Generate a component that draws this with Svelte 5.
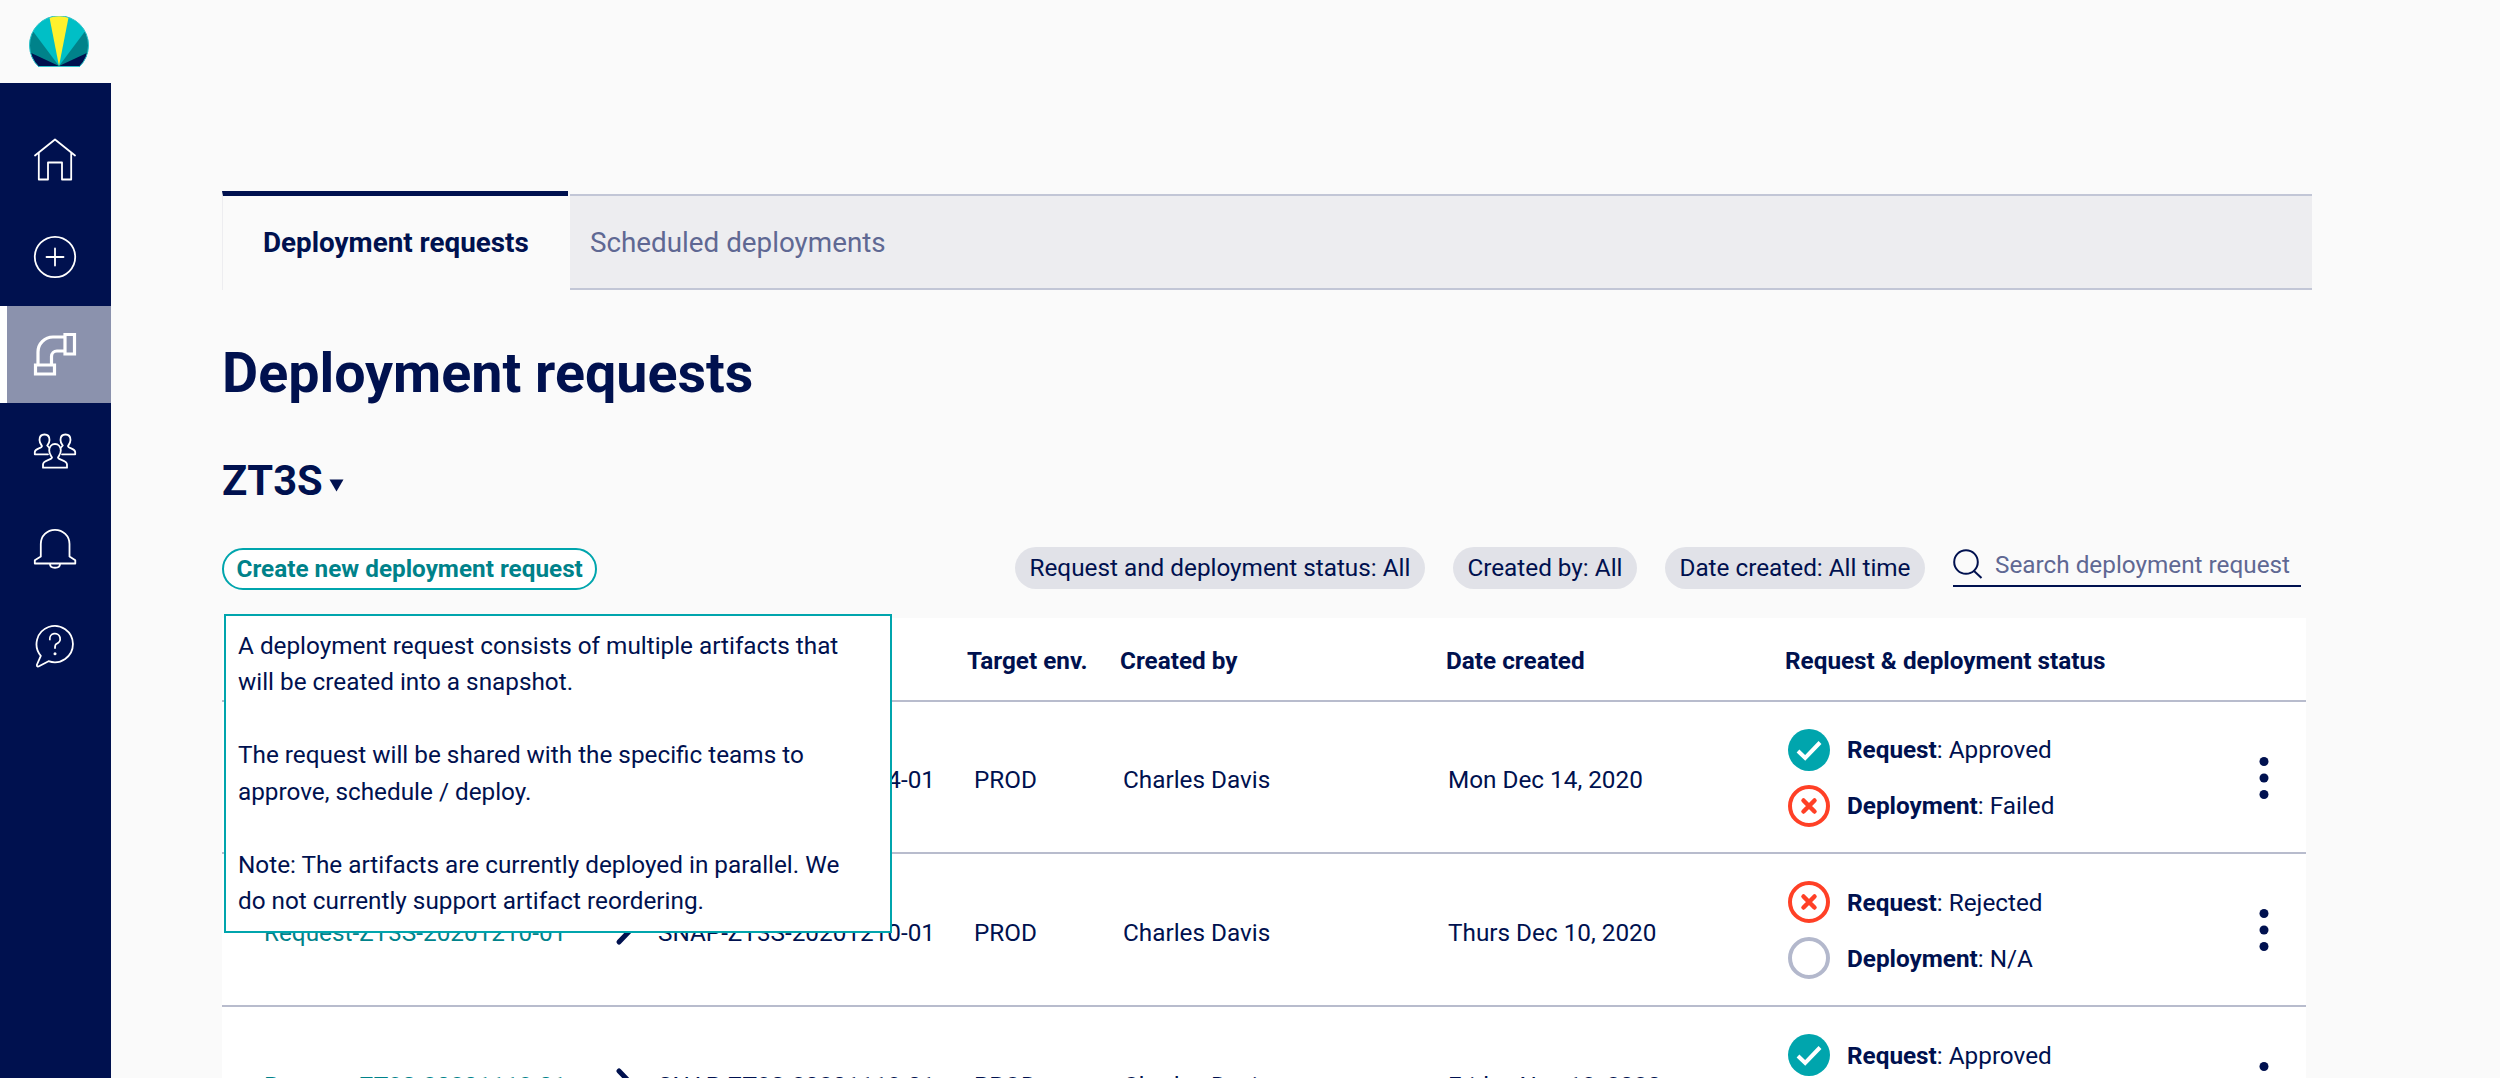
<script lang="ts">
  const navItems = ['home', 'add', 'pipeline', 'teams', 'alerts', 'help'];
  const activeItem = 'pipeline';

  const filters = ['Request and deployment status: All', 'Created by: All', 'Date created: All time'];

  const rows = [
    {
      request: 'Request-ZT3S-20201214-01',
      snapshot: 'SNAP-ZT3S-20201214-01',
      env: 'PROD',
      author: 'Charles Davis',
      date: 'Mon Dec 14, 2020',
      statuses: [
        { icon: 'ok', label: 'Request', value: 'Approved' },
        { icon: 'error', label: 'Deployment', value: 'Failed' },
      ],
    },
    {
      request: 'Request-ZT3S-20201210-01',
      snapshot: 'SNAP-ZT3S-20201210-01',
      env: 'PROD',
      author: 'Charles Davis',
      date: 'Thurs Dec 10, 2020',
      statuses: [
        { icon: 'error', label: 'Request', value: 'Rejected' },
        { icon: 'none', label: 'Deployment', value: 'N/A' },
      ],
    },
    {
      request: 'Request-ZT3S-20201113-01',
      snapshot: 'SNAP-ZT3S-20201113-01',
      env: 'PROD',
      author: 'Charles Davis',
      date: 'Friday Nov 13, 2020',
      statuses: [
        { icon: 'ok', label: 'Request', value: 'Approved' },
        { icon: 'ok', label: 'Deployment', value: 'Success' },
      ],
    },
  ];
</script>

<div class="app">
  <aside>
    <div class="logo">
      <svg width="60" height="52" viewBox="0 0 60 52">
        <clipPath id="dome"><path d="M9.5 50.5A29.5 29.5 0 1 1 50.5 50.5Z" /></clipPath>
        <g clip-path="url(#dome)">
          <rect width="60" height="52" fill="#00bfc6" />
          <path d="M30 50L-6 2V60H66V2Z" fill="#00828a" />
          <path d="M30 50L-4 34V60H64V34Z" fill="#00114f" />
          <path d="M30 50L20 -1H40Z" fill="#fff12d" />
        </g>
        <path d="M9.5 50.5A29.5 29.5 0 1 1 50.5 50.5Z" fill="none" stroke="#2fc3cb" />
      </svg>
    </div>
    <nav>
      {#each navItems as item}
        <a href="#{item}" class:active={item === activeItem} aria-label={item}>
          <svg width="44" height="44" viewBox="0 0 44 44">
            {#if item === 'home'}
              <path d="M2 17.5L22 1.5L42 17.5M5.8 15V41.5H15V24.5H29V41.5H38.2V15" />
            {:else if item === 'add'}
              <circle cx="22" cy="22" r="20.2" />
              <path d="M22 13.5V30.5M13.5 22H30.5" />
            {:else if item === 'pipeline'}
              <path class="thick" d="M32 2.5H41.5V22H32ZM2.5 33H21.5V42H2.5ZM32 5H20A15 15 0 0 0 5 20V33M32 19H24A5.5 5.5 0 0 0 18.5 24.5V33" />
            {:else if item === 'teams'}
              <path d="M15 25.3H1.8V23C1.8 19.5 9 19.5 9 17C8 15.5 6.5 13.8 6.5 11C6.5 7.5 8.6 5.5 11.5 5.5S16.5 7.5 16.5 11C16.5 13.8 15.2 15 14.2 16.5L16 18.5" />
              <path d="M29 25.3H42.2V23C42.2 19.5 35 19.5 35 17C36 15.5 37.5 13.8 37.5 11C37.5 7.5 35.4 5.5 32.5 5.5S27.5 7.500 27.500 11C27.500 13.800 28.800 15 29.800 16.500L28 18.500" />
              <path class="front" d="M19 28.500C18 26.500 16.200 25 16.200 21.500C16.200 17.500 18.800 15 22 15S27.800 17.500 27.800 21.500C27.800 25 26 26.500 25 28.500C25 31 34 31 34 35.500V38.700H10V35.500C10 31 19 31 19 28.500Z" />
            {:else if item === 'alerts'}
              <path d="M7.8 29.5V17C7.8 9 14 2.8 22 2.8S36.5 9 36.5 17V29.5L42.3 33.3V36.5H1.8V33.3Z" />
              <path d="M17 37C17 42 27 42 27 37" />
            {:else}
              <path d="M7.8 31.8A18.2 18.2 0 1 1 15.5 37.2L5.5 42.5Q3.5 43 4 40.5Z" />
              <path d="M16.8 15.5A5.2 5.2 0 1 1 23.5 19.8Q22 20.5 22 24" />
              <circle class="dot" cx="22" cy="29.8" r="1.5" />
            {/if}
          </svg>
        </a>
      {/each}
    </nav>
  </aside>

  <main>
    <div class="tabs">
      <div class="tab selected">Deployment requests</div>
      <div class="tab">Scheduled deployments</div>
    </div>

    <h1>Deployment requests</h1>

    <h2>
      ZT3S
      <svg width="15" height="13" viewBox="0 0 15 13"><path d="M0.5 0.5H14.5L7.5 12.5Z" /></svg>
    </h2>

    <div class="toolbar">
      <div class="create">
        <button>Create new deployment request</button>
        <div class="tooltip">
          <p>A deployment request consists of multiple artifacts that<br />will be created into a snapshot.</p>
          <p>The request will be shared with the specific teams to<br />approve, schedule / deploy.</p>
          <p>Note: The artifacts are currently deployed in parallel. We<br />do not currently support artifact reordering.</p>
        </div>
      </div>
      <div class="filters">
        {#each filters as filter}
          <span class="chip">{filter}</span>
        {/each}
        <div class="search">
          <svg width="30" height="30" viewBox="0 0 30 30">
            <circle cx="13" cy="13" r="11.8" />
            <path d="M20.5 21.5L28.5 29" />
          </svg>
          <span>Search deployment request</span>
        </div>
      </div>
    </div>

    <div class="table">
      <div class="row head">
        <span></span>
        <span></span>
        <span></span>
        <span>Target env.</span>
        <span>Created by</span>
        <span>Date created</span>
        <span>Request &amp; deployment status</span>
      </div>
      {#each rows as row}
        <div class="row">
          <span class="link">{row.request}</span>
          <svg class="chevron" width="20" height="32" viewBox="0 0 20 32"><path d="M4 4L15.5 16L4 28" /></svg>
          <span class="snapshot">{row.snapshot}</span>
          <span class="env">{row.env}</span>
          <span class="author">{row.author}</span>
          <span class="date">{row.date}</span>
          <div class="statuses">
            {#each row.statuses as status}
              <div class="status">
                <svg width="42" height="42" viewBox="0 0 42 42">
                  {#if status.icon === 'ok'}
                    <circle cx="21" cy="21" r="21" fill="#00a5ad" />
                    <path d="M10 22L17.2 29L32 13.5" stroke="#fff" stroke-width="4" />
                  {:else if status.icon === 'error'}
                    <circle cx="21" cy="21" r="19" stroke="#ff4026" stroke-width="4" />
                    <path d="M15.5 15.5L26.5 26.5M26.5 15.5L15.5 26.5" stroke="#ff4026" stroke-width="4.5" stroke-linecap="round" />
                  {:else}
                    <circle cx="21" cy="21" r="19" stroke="#b3b8cc" stroke-width="4" />
                  {/if}
                </svg>
                <span><b>{status.label}</b>: {status.value}</span>
              </div>
            {/each}
          </div>
          <svg class="more" width="10" height="44" viewBox="0 0 10 44">
            <circle cx="5" cy="5.5" r="4.5" />
            <circle cx="5" cy="22" r="4.5" />
            <circle cx="5" cy="38.5" r="4.5" />
          </svg>
        </div>
      {/each}
    </div>
  </main>
</div>

<style>
:global(body) {
  background: #fafafa;
}
.app {
  display: flex;
  height: 1078px;
  overflow: hidden;
  font-family: Roboto, "Liberation Sans", sans-serif;
  font-size: 24.3px;
  color: #00114f;
}

aside {
  display: flex;
  flex-direction: column;
  flex: none;
  width: 111px;
}
.logo {
  height: 83px;
  box-sizing: border-box;
  padding: 16px 0 0 29px;
}
.logo svg {
  display: block;
}
nav {
  flex: 1;
  padding-top: 28.3px;
  background: #00114f;
}
nav a {
  display: flex;
  align-items: center;
  height: 97.2px;
  padding-left: 33px;
}
nav a.active {
  box-sizing: border-box;
  border-left: 7px solid #fff;
  padding-left: 26px;
  background: #8b92ad;
}
nav svg {
  fill: none;
  stroke: #fff;
  stroke-width: 1.8;
  stroke-linejoin: round;
  stroke-linecap: round;
}
nav .thick {
  stroke-width: 3.2;
  stroke-linejoin: miter;
}
nav .front {
  fill: #00114f;
}
nav .dot {
  fill: #fff;
  stroke: none;
}

main {
  flex: none;
  width: 2090px;
  padding: 191px 0 0 111px;
}

.tabs {
  display: flex;
  height: 99px;
}
.tab {
  flex: 1;
  box-sizing: border-box;
  margin-top: 3px;
  padding-left: 20px;
  border-top: 2px solid #c2c6d6;
  border-bottom: 2px solid #c2c6d6;
  background: #ededf0;
  font-size: 27.8px;
  line-height: 93px;
  color: #5f6893;
}
.tab.selected {
  flex: none;
  width: 346px;
  margin: 0 2px 0 0;
  padding-left: 40px;
  border-top: 5px solid #00114f;
  border-left: 1px solid #ededf0;
  border-bottom: none;
  background: none;
  font-weight: 700;
  color: #00114f;
}

h1 {
  margin: 50px 0 0;
  font-size: 55.6px;
  line-height: 66px;
  font-weight: 700;
}
h2 {
  display: flex;
  align-items: center;
  gap: 6px;
  margin: 50px 0 0;
  font-size: 41.7px;
  line-height: 50px;
  font-weight: 700;
}
h2 svg {
  margin-top: 8px;
  fill: #00114f;
}

.toolbar {
  display: flex;
  justify-content: space-between;
  height: 71px;
  margin-top: 41px;
  padding-right: 11px;
}
.create {
  position: relative;
  padding-top: 1px;
}
button {
  display: block;
  box-sizing: border-box;
  height: 42px;
  padding: 0 12.5px;
  border: 2px solid #00a5ad;
  border-radius: 21px;
  background: #fff;
  font: 700 24.3px/38px Roboto, "Liberation Sans", sans-serif;
  color: #00828a;
}
.tooltip {
  position: absolute;
  z-index: 1;
  top: 67px;
  left: 2px;
  box-sizing: border-box;
  width: 668px;
  height: 319px;
  padding: 12px 12px;
  border: 2px solid #00a5ad;
  background: #fff;
  white-space: nowrap;
}
.tooltip p {
  margin: 0 0 36.45px;
  line-height: 36.45px;
}
.filters {
  display: flex;
  align-items: flex-start;
  gap: 28px;
}
.chip {
  height: 42px;
  padding: 0 14.5px;
  border-radius: 21px;
  background: #e1e2e8;
  line-height: 42px;
}
.search {
  display: flex;
  box-sizing: border-box;
  width: 348px;
  height: 40px;
  gap: 12px;
  border-bottom: 2px solid #00114f;
  line-height: 36px;
  color: #5f6893;
  white-space: nowrap;
}
.search svg {
  flex: none;
  margin-top: 2px;
  fill: none;
  stroke: #00114f;
  stroke-width: 2;
}

.table {
  width: 2084px;
  background: #fff;
}
.row {
  display: grid;
  grid-template-columns: 351px 42px 310px 153px 326px 339px 474px 1fr;
  align-items: center;
  box-sizing: border-box;
  height: 152.8px;
  padding-left: 42px;
  border-bottom: 2px solid #b8bccd;
}
.row.head {
  height: 83.7px;
  font-weight: 700;
}
.link {
  color: #00828a;
}
.chevron {
  fill: none;
  stroke: #00114f;
  stroke-width: 5;
  stroke-linecap: round;
  stroke-linejoin: round;
}
.row > span {
  padding-top: 5px;
}
.row.head > span {
  padding-top: 2.5px;
}
.row .snapshot {
  padding-left: 1px;
}
.env {
  padding-left: 7px;
}
.author {
  padding-left: 3px;
}
.date {
  padding-left: 2px;
}
.statuses {
  display: grid;
  gap: 14px;
  padding: 1px 0 0 3px;
}
.status {
  display: flex;
  align-items: center;
  gap: 17px;
}
.status svg {
  fill: none;
}
.more {
  margin-top: 1px;
  fill: #00114f;
}
</style>
